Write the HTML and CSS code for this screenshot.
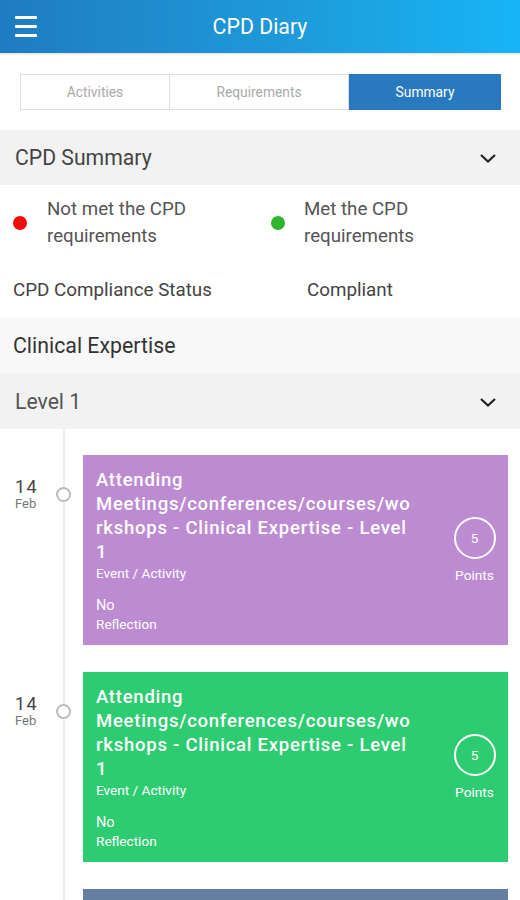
FILE: index.html
```html
<!DOCTYPE html>
<html>
<head>
<meta charset="utf-8">
<link rel="stylesheet" href="styles.css">
</head>
<body>
<header class="appbar">
  <div class="menu"><span></span><span></span><span></span></div>
  <div class="title">CPD Diary</div>
</header>
<nav class="tabs">
  <div class="tab">Activities</div>
  <div class="tab">Requirements</div>
  <div class="tab active">Summary</div>
</nav>
<section class="panel-head">
  <span>CPD Summary</span>
  <svg class="chev" width="18" height="12" viewBox="0 0 18 12"><path d="M2 3 L9 9.5 L16 3" fill="none" stroke="#222" stroke-width="2.2"/></svg>
</section>
<section class="legend">
  <div class="legend-row">
    <div class="legend-item"><span class="dot red"></span><span class="ltext">Not met the CPD requirements</span></div>
    <div class="legend-item second"><span class="dot green"></span><span class="ltext">Met the CPD requirements</span></div>
  </div>
  <div class="status-row">
    <div class="status-label">CPD Compliance Status</div>
    <div class="status-value">Compliant</div>
  </div>
</section>
<section class="category">Clinical Expertise</section>
<section class="panel-head level">
  <span>Level 1</span>
  <svg class="chev" width="18" height="12" viewBox="0 0 18 12"><path d="M2 3 L9 9.5 L16 3" fill="none" stroke="#222" stroke-width="2.2"/></svg>
</section>
<section class="timeline">
  <div class="entry">
    <div class="date"><div class="day">14</div><div class="mon">Feb</div></div>
    <div class="node"></div>
    <div class="card purple">
      <div class="card-main">
        <div class="card-title">Attending Meetings/conferences/courses/workshops - Clinical Expertise - Level 1</div>
        <div class="card-sub">Event / Activity</div>
        <div class="card-refl">No</div>
        <div class="card-sub2">Reflection</div>
      </div>
      <div class="points"><div class="ring">5</div><div class="plabel">Points</div></div>
    </div>
  </div>
  <div class="entry">
    <div class="date"><div class="day">14</div><div class="mon">Feb</div></div>
    <div class="node"></div>
    <div class="card green">
      <div class="card-main">
        <div class="card-title">Attending Meetings/conferences/courses/workshops - Clinical Expertise - Level 1</div>
        <div class="card-sub">Event / Activity</div>
        <div class="card-refl">No</div>
        <div class="card-sub2">Reflection</div>
      </div>
      <div class="points"><div class="ring">5</div><div class="plabel">Points</div></div>
    </div>
  </div>
  <div class="entry">
    <div class="date"></div>
    <div class="node hidden"></div>
    <div class="card slate"></div>
  </div>
</section>
</body>
</html>
```
FILE: styles.css
```css
* { box-sizing: border-box; }
html, body { margin: 0; padding: 0; }
body {
  width: 520px;
  height: 900px;
  overflow: hidden;
  font-family: Roboto, "Noto Sans", "Liberation Sans", sans-serif;
  background: #fff;
  color: #444;
}
.appbar {
  height: 53px;
  background: linear-gradient(90deg, #1f7cc1 0%, #1e9ad9 55%, #17b5f6 100%);
  display: flex;
  align-items: center;
  position: relative;
  box-shadow: 0 1px 2px rgba(0,0,0,0.15);
}
.menu {
  width: 22px;
  margin-left: 15px;
  display: flex;
  flex-direction: column;
  gap: 6px;
}
.menu span {
  display: block;
  height: 3px;
  background: #fff;
  border-radius: 1px;
}
.title {
  position: absolute;
  left: 0; right: 0;
  text-align: center;
  color: #fff;
  font-size: 21.3px;
  pointer-events: none;
}
.tabs {
  display: flex;
  margin: 21px 19px 20px 20px;
  height: 36px;
}
.tab {
  border: 1px solid #e0e0e0;
  display: flex;
  align-items: center;
  justify-content: center;
  font-size: 13.8px;
  color: #aaa;
  background: #fff;
}
.tab:nth-child(1) { width: 150px; }
.tab:nth-child(2) { width: 179px; border-left: none; }
.tab.active { flex: 1; background: #2879bf; border-color: #2879bf; color: #fff; }
.panel-head {
  height: 55px;
  background: #f2f2f2;
  display: flex;
  align-items: center;
  justify-content: space-between;
  padding: 0 23px 0 15px;
  font-size: 21.2px;
  color: #444;
}
.panel-head.level { color: #555; }
.chev { display: block; }
.legend {
  padding: 11px 0 13px 13px;
}
.legend-row { display: flex; }
.legend-item {
  display: flex;
  align-items: center;
  width: 257px;
  font-size: 18.7px;
  line-height: 27px;
  color: #555;
}
.legend-item.second { width: 240px; }
.dot {
  width: 14px; height: 14px;
  border-radius: 50%;
  flex: none;
  margin-right: 20px;
}
.dot.red { background: #f30a0a; }
.dot.green { background: #2db52d; margin-left: 1px; margin-right: 19px; }
.ltext { width: 160px; }
.status-row {
  display: flex;
  margin-top: 27px;
  font-size: 18.8px;
  line-height: 27px;
  color: #444;
}
.status-label { width: 294px; }
.category {
  height: 57px;
  background: #f8f8f8;
  display: flex;
  align-items: center;
  padding-left: 13px;
  font-size: 21.3px;
  color: #333;
}
.timeline {
  position: relative;
  padding-top: 26px;
}
.timeline::before {
  content: "";
  position: absolute;
  left: 63px;
  top: 0;
  bottom: 0;
  width: 2px;
  background: #eeeeee;
}
.entry {
  display: flex;
  align-items: flex-start;
  margin-bottom: 27px;
  position: relative;
}
.date {
  width: 50px;
  padding-left: 15px;
  padding-top: 22px;
}
.day { font-size: 18px; line-height: 20px; color: #444; letter-spacing: 1.5px; }
.mon { font-size: 13px; line-height: 14px; color: #777; }
.node {
  width: 15px; height: 15px;
  border-radius: 50%;
  border: 2px solid #bbb;
  background: #fff;
  margin-left: 6px;
  margin-top: 32px;
  position: relative;
  z-index: 1;
}
.node.hidden { visibility: hidden; }
.card {
  margin-left: 12px;
  width: 425px;
  display: flex;
  align-items: center;
  padding: 12px 0 12px 13px;
  color: #fff;
  min-height: 190px;
}
.purple { background: #bd8bd2; }
.green { background: #2ecc71; }
.slate { background: #647f9f; }
.card-main { width: 319px; }
.card-title {
  font-size: 18.5px;
  line-height: 24px;
  font-weight: 500;
  letter-spacing: 0.75px;
  overflow-wrap: anywhere;
}
.card-sub { font-size: 13.6px; line-height: 18px; }
.card-refl { font-size: 14.5px; line-height: 18px; margin-top: 15px; }
.card-sub2 { font-size: 13.6px; line-height: 18px; }
.points {
  flex: 1;
  display: flex;
  flex-direction: column;
  align-items: center;
  padding-left: 26px;
}
.ring {
  width: 42px; height: 42px;
  border: 2px solid #fff;
  border-radius: 50%;
  display: flex;
  align-items: center;
  justify-content: center;
  font-size: 13.6px;
}
.plabel { font-size: 13.7px; margin-top: 8px; }
```
